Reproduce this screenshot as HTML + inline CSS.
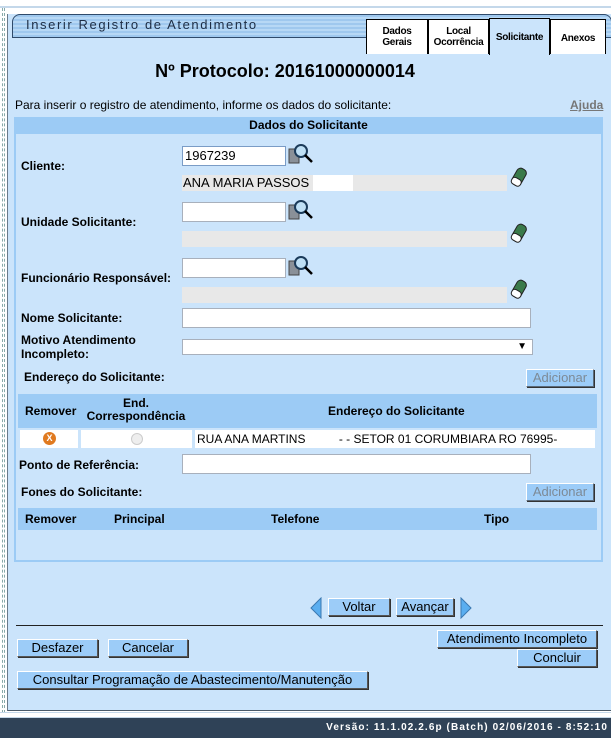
<!DOCTYPE html>
<html><head><style>
*{box-sizing:border-box;margin:0;padding:0}
body{width:611px;height:738px;position:relative;background:#fff;font-family:"Liberation Sans",Arial,sans-serif;font-size:12px;color:#000;overflow:hidden}
.a{position:absolute}
.lbl{font-weight:bold;font-size:12px}
.inp{position:absolute;background:#fff;border:1px solid #a8b0bc;height:20px;font-size:13px;padding:1px 2px}
.gray{position:absolute;background:#e8e8e8;height:16px;font-size:13px;padding-left:1px}
.btn{position:absolute;background:#9cccf8;border:1px solid #555;border-top-color:#fff;border-left-color:#fff;box-shadow:1px 1px 0 #333;font-size:13px;text-align:center;line-height:16px;height:18px}
.dis{color:#7d8a96;background:#9cccf8;border-color:#fff #5a6a7a #5a6a7a #fff}
.th{background:#9ccbf5;font-weight:bold}
.tab{position:absolute;top:19px;height:35px;background:#fff;border:1px solid #000;border-bottom:none;font-family:"Liberation Sans Narrow","Liberation Sans",sans-serif;font-weight:bold;font-size:10px;text-align:center;line-height:11px;letter-spacing:-0.3px}
</style></head><body>
<div class="a" style="left:0;top:0;width:611px;height:8px;background:#fff;border-bottom:2px solid #c4d8ea"></div>
<div class="a" style="left:2px;top:8px;width:3px;height:705px;border-left:1px dashed #8aa;border-right:1px dashed #8aa"></div>
<div class="a" style="left:7px;top:14px;width:604px;height:697px;background:#cbe4fb;border-left:1px solid #6a7a8a;border-bottom:1px solid #4a5a6a"></div>
<div class="a" style="left:12px;top:14px;width:600px;height:24px;background:repeating-linear-gradient(#9fc8ee 0 2px,#b7d8f5 2px 4px);border:1px solid #2f4a6a;border-radius:8px 8px 0 0"></div>
<div class="a" style="left:26px;top:17px;font-size:13px;letter-spacing:1.6px;color:#1d2d44">Inserir Registro de Atendimento</div>
<div class="tab" style="left:366px;width:62px;padding-top:6px">Dados<br>Gerais</div>
<div class="tab" style="left:428px;width:61px;padding-top:6px">Local<br>Ocorrência</div>
<div class="tab" style="left:489px;width:61px;background:#cbe4fb;top:18px;height:37px;padding-top:13px">Solicitante</div>
<div class="tab" style="left:550px;width:56px;padding-top:13px">Anexos</div>
<div class="a" style="left:20px;top:61px;width:530px;text-align:center;font-size:18px;font-weight:bold">Nº Protocolo: 20161000000014</div>
<div class="a" style="left:15px;top:98px;font-size:12px">Para inserir o registro de atendimento, informe os dados do solicitante:</div>
<div class="a" style="left:570px;top:98px;font-size:12px;font-weight:bold;color:#777;text-decoration:underline">Ajuda</div>
<div class="a" style="left:14px;top:117px;width:589px;height:445px;border:2px solid #9ccbf5"></div>
<div class="a th" style="left:14px;top:117px;width:589px;height:17px;text-align:center;line-height:17px">Dados do Solicitante</div>
<div class="a lbl" style="left:21px;top:159px">Cliente:</div>
<div class="inp" style="left:182px;top:146px;width:104px;border-color:#7a9cc6">1967239</div>
<div class="gray" style="left:182px;top:175px;width:325px">ANA MARIA PASSOS <span style="display:inline-block;width:40px;height:16px;background:#fff;vertical-align:top"></span></div>
<div class="a lbl" style="left:21px;top:215px">Unidade Solicitante:</div>
<div class="inp" style="left:182px;top:202px;width:104px"></div>
<div class="gray" style="left:182px;top:231px;width:325px"></div>
<div class="a lbl" style="left:21px;top:271px">Funcionário Responsável:</div>
<div class="inp" style="left:182px;top:258px;width:104px"></div>
<div class="gray" style="left:182px;top:287px;width:325px"></div>
<svg class="a" style="left:288px;top:143px" width="26" height="22"><rect x="1" y="6" width="10" height="14" fill="#8a9098" stroke="#444"/><circle cx="13" cy="8" r="6" fill="#bfe0f6" stroke="#1b3b5a" stroke-width="2"/><line x1="17" y1="12" x2="24" y2="19" stroke="#000" stroke-width="2.5"/></svg>
<svg class="a" style="left:288px;top:199px" width="26" height="22"><rect x="1" y="6" width="10" height="14" fill="#8a9098" stroke="#444"/><circle cx="13" cy="8" r="6" fill="#bfe0f6" stroke="#1b3b5a" stroke-width="2"/><line x1="17" y1="12" x2="24" y2="19" stroke="#000" stroke-width="2.5"/></svg>
<svg class="a" style="left:288px;top:255px" width="26" height="22"><rect x="1" y="6" width="10" height="14" fill="#8a9098" stroke="#444"/><circle cx="13" cy="8" r="6" fill="#bfe0f6" stroke="#1b3b5a" stroke-width="2"/><line x1="17" y1="12" x2="24" y2="19" stroke="#000" stroke-width="2.5"/></svg>
<svg class="a" style="left:510px;top:167px" width="18" height="20"><g transform="rotate(30 9 10)"><rect x="4" y="1" width="10" height="18" rx="4" fill="#3a7a4a" stroke="#222"/><rect x="4" y="12" width="10" height="7" rx="3" fill="#fff" stroke="#222"/></g></svg>
<svg class="a" style="left:510px;top:223px" width="18" height="20"><g transform="rotate(30 9 10)"><rect x="4" y="1" width="10" height="18" rx="4" fill="#3a7a4a" stroke="#222"/><rect x="4" y="12" width="10" height="7" rx="3" fill="#fff" stroke="#222"/></g></svg>
<svg class="a" style="left:510px;top:279px" width="18" height="20"><g transform="rotate(30 9 10)"><rect x="4" y="1" width="10" height="18" rx="4" fill="#3a7a4a" stroke="#222"/><rect x="4" y="12" width="10" height="7" rx="3" fill="#fff" stroke="#222"/></g></svg>
<div class="a lbl" style="left:21px;top:311px">Nome Solicitante:</div>
<div class="inp" style="left:182px;top:308px;width:349px"></div>
<div class="a lbl" style="left:21px;top:333px;line-height:14px">Motivo Atendimento<br>Incompleto:</div>
<div class="inp" style="left:182px;top:339px;width:351px;height:16px;font-size:10px;text-align:right;padding:0 5px;line-height:14px">▼</div>
<div class="a lbl" style="left:24px;top:370px">Endereço do Solicitante:</div>
<div class="btn dis" style="left:526px;top:369px;width:68px">Adicionar</div>
<div class="a th" style="left:18px;top:394px;width:579px;height:34px"></div>
<div class="a lbl" style="left:25px;top:404px">Remover</div>
<div class="a lbl" style="left:76px;top:397px;width:120px;text-align:center;line-height:13px">End.<br>Correspondência</div>
<div class="a lbl" style="left:328px;top:404px">Endereço do Solicitante</div>
<div class="a" style="left:18px;top:429px;width:579px;height:20px;background:#cbe4fb"></div>
<div class="a" style="left:20px;top:430px;width:58px;height:18px;background:#fff"></div>
<div class="a" style="left:81px;top:430px;width:111px;height:18px;background:#fff"></div>
<div class="a" style="left:195px;top:430px;width:400px;height:18px;background:#fff;font-size:12px;line-height:18px;padding-left:2px;white-space:pre">RUA ANA MARTINS          - - SETOR 01 CORUMBIARA RO 76995-</div>
<div class="a" style="left:43px;top:432px;width:13px;height:13px;border-radius:50%;background:#e07a20;color:#fff;font-size:9px;font-weight:bold;text-align:center;line-height:13px">X</div>
<div class="a" style="left:131px;top:433px;width:12px;height:12px;border-radius:50%;background:#eee;border:1px solid #ccc"></div>
<div class="a lbl" style="left:19px;top:458px">Ponto de Referência:</div>
<div class="inp" style="left:182px;top:454px;width:349px"></div>
<div class="a lbl" style="left:21px;top:485px">Fones do Solicitante:</div>
<div class="btn dis" style="left:526px;top:483px;width:68px">Adicionar</div>
<div class="a th" style="left:18px;top:508px;width:579px;height:22px"></div>
<div class="a lbl" style="left:25px;top:512px">Remover</div>
<div class="a lbl" style="left:114px;top:512px">Principal</div>
<div class="a lbl" style="left:271px;top:512px">Telefone</div>
<div class="a lbl" style="left:484px;top:512px">Tipo</div>
<svg class="a" style="left:309px;top:597px" width="14" height="22"><path d="M12 1 L2 11 L12 21 Z" fill="#5aaef0" stroke="#3a78b0"/></svg>
<div class="btn" style="left:328px;top:598px;width:62px">Voltar</div>
<div class="btn" style="left:396px;top:598px;width:58px">Avançar</div>
<svg class="a" style="left:459px;top:597px" width="14" height="22"><path d="M2 1 L12 11 L2 21 Z" fill="#5aaef0" stroke="#3a78b0"/></svg>
<div class="a" style="left:16px;top:625px;width:587px;height:1px;background:#222"></div>
<div class="btn" style="left:437px;top:630px;width:160px">Atendimento Incompleto</div>
<div class="btn" style="left:517px;top:649px;width:80px">Concluir</div>
<div class="btn" style="left:17px;top:639px;width:81px">Desfazer</div>
<div class="btn" style="left:108px;top:639px;width:80px">Cancelar</div>
<div class="btn" style="left:17px;top:671px;width:351px">Consultar Programação de Abastecimento/Manutenção</div>
<div class="a" style="left:0;top:712px;width:611px;height:6px;background:#fff;border-top:1px solid #c4d8ea;border-bottom:1px solid #c4d8ea"></div>
<div class="a" style="left:0;top:718px;width:611px;height:20px;background:#2f4257;color:#fff;font-family:'Liberation Sans',sans-serif;font-weight:bold;font-size:10px;text-align:right;line-height:19px;padding-right:3px;letter-spacing:1.1px">Versão: 11.1.02.2.6p (Batch) 02/06/2016 - 8:52:10</div>
</body></html>
